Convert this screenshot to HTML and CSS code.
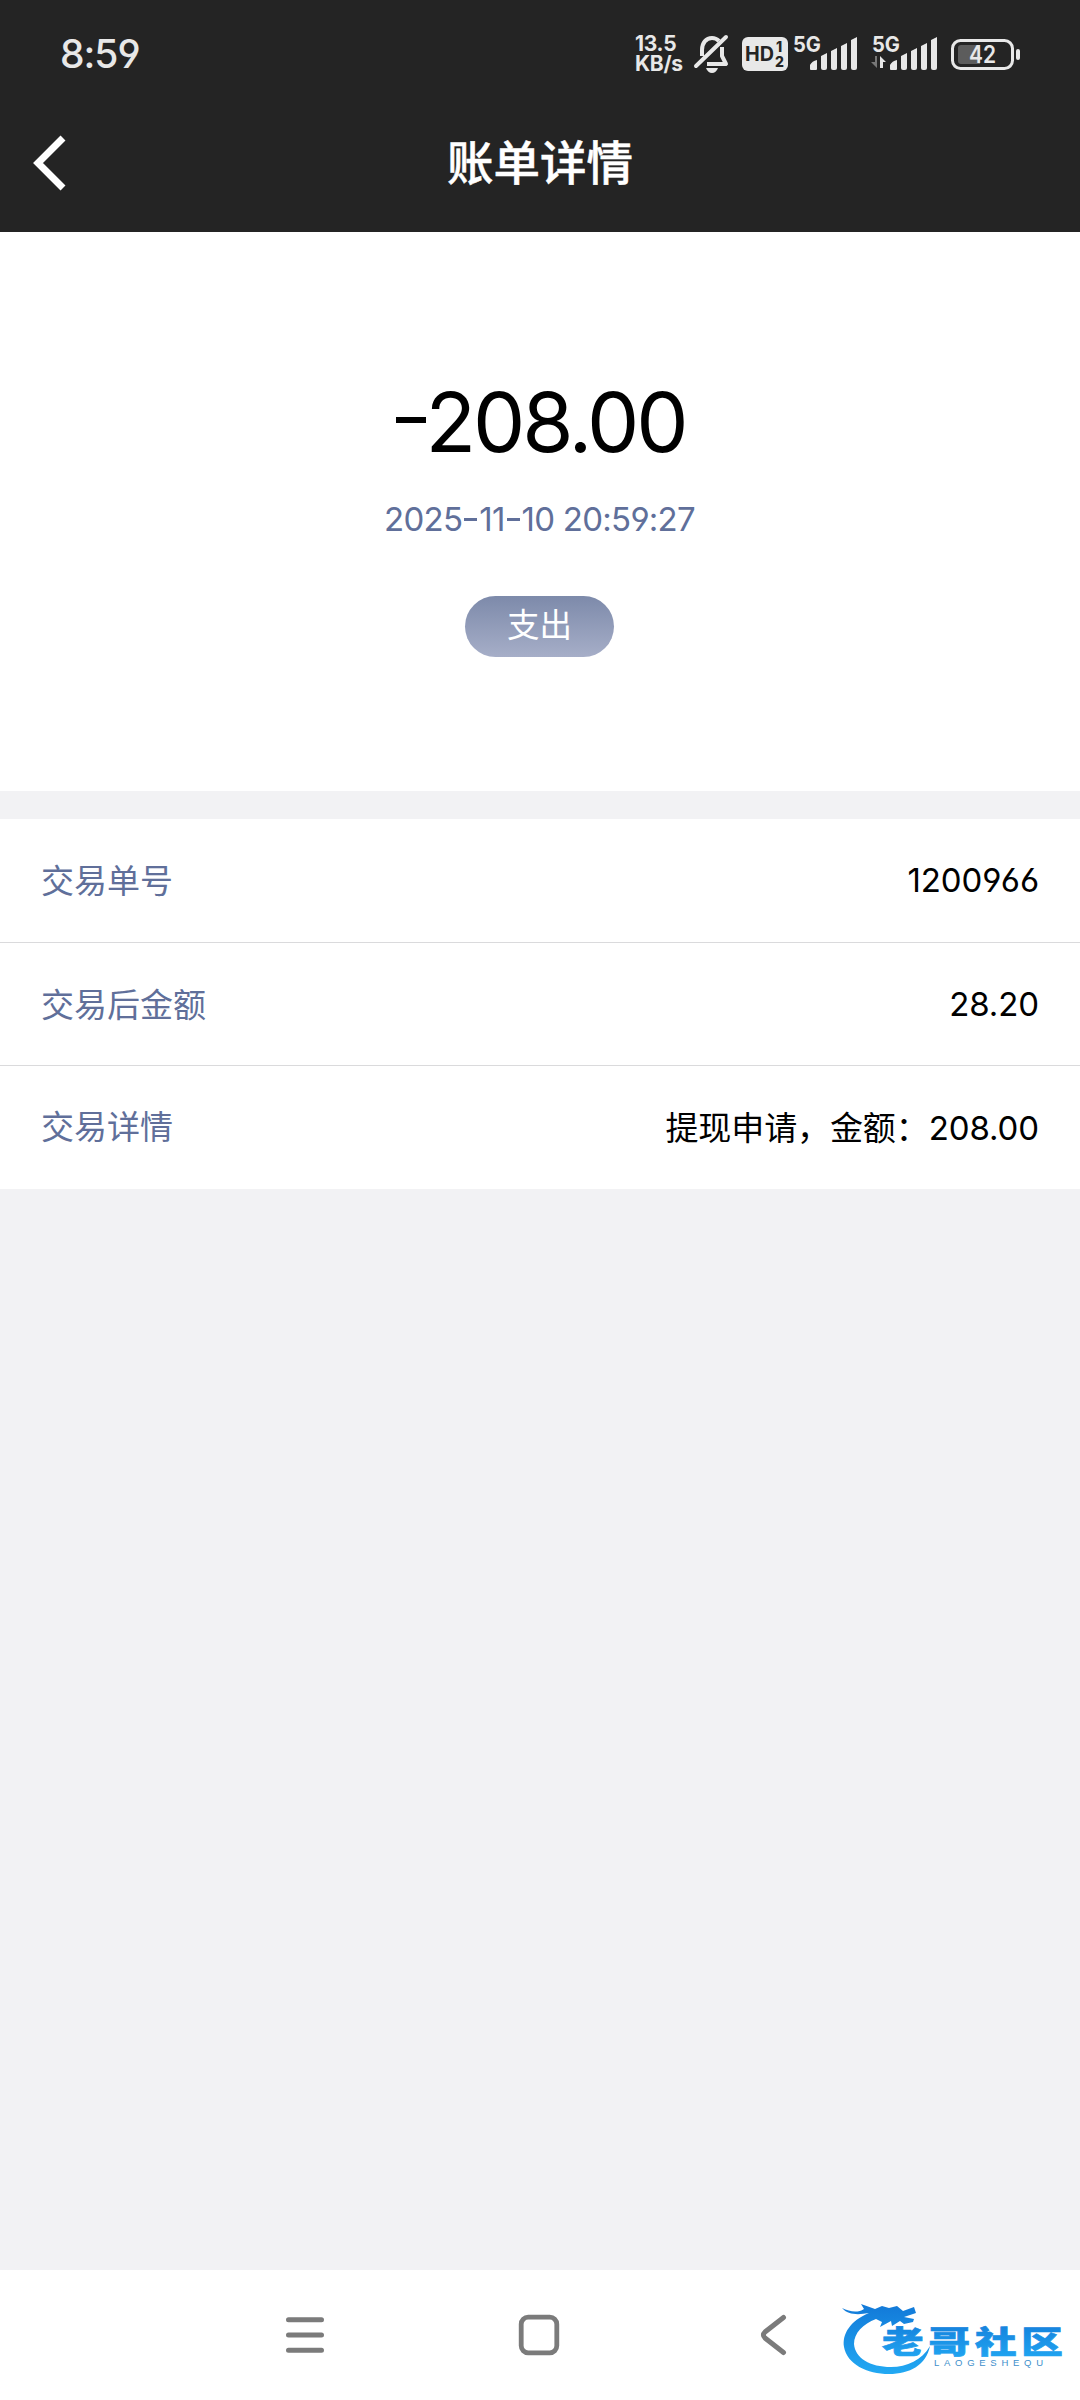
FILE: index.html
```html
<!DOCTYPE html>
<html lang="zh-CN">
<head>
<meta charset="utf-8">
<title>账单详情</title>
<link rel="stylesheet" href="styles.css">
</head>
<body>
<div class="screen">
  <header class="top">
    <div class="status">
      <span class="clock">8:59</span>
      <div class="indicators">
        <div class="speed"><span>13.5</span><span class="unit">KB/s</span></div>
        <svg class="bell" width="36" height="40" viewBox="0 0 36 40" fill="none" stroke="#e8e8e8" stroke-width="4">
          <path d="M8 22V16C8 9 12 4 18 4C21 4 23 5 25 7M28 13V22L32 30H13" stroke-linejoin="round"/>
          <path d="M2 32L32 3" stroke-linecap="round"/>
          <path d="M12 34H24Q22 39 18 39Q14 39 12 34Z" fill="#e8e8e8" stroke="none"/>
        </svg>
        <svg class="hd" width="46" height="34" viewBox="0 0 46 34">
          <rect width="46" height="34" rx="6" fill="#e8e8e8"/>
          <text x="3" y="24" font-size="20" font-weight="700" textLength="29" lengthAdjust="spacingAndGlyphs">HD</text>
          <text x="34" y="15" font-size="14" font-weight="800">1</text>
          <text x="33" y="30" font-size="14" font-weight="800">2</text>
        </svg>
        <svg class="signal" width="66" height="42" viewBox="0 -4 66 42" fill="#e8e8e8">
          <text x="0" y="18" font-size="21.500" font-weight="700" textLength="28" lengthAdjust="spacingAndGlyphs">5G</text>
          <path d="M17 35V31Q19 27 24 26V35Q24 36 23 36H18Q17 36 17 35ZM28 22L34 19V34Q34 36 32 36H30Q28 36 28 34ZM38 17L44 14V34Q44 36 42 36H40Q38 36 38 34ZM48 12L54 9V34Q54 36 52 36H50Q48 36 48 34ZM58 6L64 3V34Q64 36 62 36H60Q58 36 58 34Z"/>
        </svg>
        <svg class="signal-data" width="66" height="42" viewBox="0 -4 66 42" fill="#e8e8e8">
          <text x="0" y="18" font-size="21.500" font-weight="700" textLength="28" lengthAdjust="spacingAndGlyphs">5G</text>
          <path d="M3 22H5V34L-1 28H3Z" fill="#777"/>
          <path d="M8 22L14 28H11V34H8Z"/>
          <path d="M18 35V31Q20 27 25 26V35Q25 36 24 36H19Q18 36 18 35ZM29 22L35 19V34Q35 36 33 36H31Q29 36 29 34ZM39 17L45 14V34Q45 36 43 36H41Q39 36 39 34ZM49 12L55 9V34Q55 36 53 36H51Q49 36 49 34ZM59 6L65 3V34Q65 36 63 36H61Q59 36 59 34Z"/>
        </svg>
        <svg class="battery" width="70" height="32" viewBox="0 0 70 32">
          <rect x="1.500" y="1.500" width="60" height="28" rx="8" fill="none" stroke="#e8e8e8" stroke-width="3"/>
          <path d="M10 6H29V25H10Q7 25 7 22V9Q7 6 10 6Z" fill="#5c5c5c"/>
          <rect x="65" y="10" width="4" height="11" rx="2" fill="#e8e8e8"/>
          <text x="18" y="24" font-size="24" font-weight="600" fill="#e8e8e8" textLength="27" lengthAdjust="spacingAndGlyphs">42</text>
        </svg>
      </div>
    </div>
    <div class="titlebar">
      <svg class="back" width="34" height="56" viewBox="0 0 34 56" fill="none" stroke="#fff" stroke-width="7"><path d="M31 3L6 28L31 53"/></svg>
      <h1>账单详情</h1>
    </div>
  </header>
  <section class="summary">
    <div class="amount"><span class="minus"></span>208.00</div>
    <div class="date">2025<i></i>11<i></i>10 20:59:27</div>
    <div class="tag">支出</div>
  </section>
  <section class="details">
    <div class="row"><span class="label">交易单号</span><span class="value">1200966</span></div>
    <div class="row"><span class="label">交易后金额</span><span class="value">28.20</span></div>
    <div class="row"><span class="label">交易详情</span><span class="value">提现申请，金额：208.00</span></div>
  </section>
  <nav class="navbar">
    <svg width="40" height="40" viewBox="0 0 40 40" fill="none" stroke="#7b7b7b" stroke-width="5" stroke-linecap="round"><path d="M3.500 4.700H36.500M3.500 20H36.500M3.500 35.300H36.500"/></svg>
    <svg width="42" height="42" viewBox="0 0 42 42" fill="none" stroke="#7b7b7b" stroke-width="4.800"><rect x="3.200" y="3.200" width="35.600" height="35.600" rx="7"/></svg>
    <svg width="28" height="42" viewBox="0 0 28 42" fill="none" stroke="#7b7b7b" stroke-width="5" stroke-linecap="round"><path d="M24.500 3.500L6 18Q2.800 21 6 24L24.500 38.500"/></svg>
  </nav>
  <svg class="watermark" width="226" height="80" viewBox="0 0 226 80">
    <defs>
      <linearGradient id="blue" x1="0" y1="0" x2="0" y2="1"><stop offset="0" stop-color="#1279d8"/><stop offset="1" stop-color="#22a9f3"/></linearGradient>
    </defs>
    <path d="M29 15C10 23 2 36 4 49C7 66 27 76 49 76C70 76 86 67 90 48C82 62 67 69 51 69C30 69 15 60 14 46C14 35 23 26 36 21L42 24L40 29L51 23L52 28L60 23L64 26L73 24L74 21L64 19L76 15L74 9L63 13L57 8L49 10L42 8L35 11L21 6L24 11C18 15 10 14 2 10C8 17 18 17 29 15Z" fill="url(#blue)"/>
    <g transform="translate(42 54.500) scale(1.340 1)" font-size="31" font-weight="900" fill="url(#blue)" stroke="url(#blue)" stroke-width="0.700">
      <text x="0" y="0" textLength="135">老哥社区</text>
    </g>
    <text x="94" y="68" font-size="9.500" fill="#3e8fcb" textLength="109" class="latin">LAOGESHEQU</text>
  </svg>
</div>
</body>
</html>
```
FILE: styles.css
```css
* { box-sizing: border-box; }
body { margin: 0; background: #f2f2f4; }
svg { display: block; flex: none; overflow: visible; }
.screen {
  position: relative;
  display: flex;
  flex-direction: column;
  width: 1080px;
  height: 2400px;
  overflow: hidden;
  font-family: Inter, "Noto Sans CJK SC", sans-serif;
  font-feature-settings: "cv03", "cv04";
  color: #000;
}
.top { height: 232px; background: #242424; color: #fff; }
.status {
  display: flex;
  justify-content: space-between;
  align-items: flex-start;
  height: 94px;
  padding: 30px 59px 0 60px;
  color: #e8e8e8;
}
.clock { font-size: 39px; line-height: 48px; font-weight: 500; letter-spacing: -1px; }
.indicators { display: flex; align-items: flex-start; }
.speed { display: flex; flex-direction: column; width: 50px; padding-top: 4px; margin-right: 9px; font-size: 21px; line-height: 20px; font-weight: 700; letter-spacing: -0.3px; }
.bell { margin: 4px 12px 0 0; }
.hd { margin: 7px 5px 0 0; fill: #242424; }
.signal { margin-right: 13px; }
.signal-data { margin-right: 13px; }
.battery { margin-top: 9px; }
.titlebar { display: grid; grid-template-columns: 80px 1fr 80px; align-items: center; height: 138px; }
.back { margin-left: 32px; }
h1 { margin: 0; text-align: center; font-size: 46.500px; line-height: 60px; font-weight: 500; -webkit-text-stroke: 0.500px #fff; }
.summary {
  display: flex;
  flex-direction: column;
  align-items: center;
  height: 559px;
  padding: 138px 1px 0 0;
  background: #fff;
}
.amount { display: flex; align-items: center; height: 104px; font-size: 83px; line-height: 104px; letter-spacing: -3.200px; font-weight: 400; }
.minus { width: 30px; height: 6px; margin: -5px 0 0 2px; background: #000; }
.date { display: flex; align-items: center; margin-top: 23px; font-size: 33px; line-height: 44px; letter-spacing: -0.75px; color: #606f9a; white-space: pre; }
.date i { width: 13px; height: 3px; margin: 0 2px; background: #606f9a; }
.tag {
  width: 149px;
  height: 61px;
  margin-top: 55px;
  border-radius: 31px;
  background: linear-gradient(#7d8aaa, #a6aec8);
  color: #fff;
  font-size: 32.500px;
  line-height: 60px;
  text-align: center;
}
.details { margin-top: 28px; background: #fff; }
.row { display: flex; justify-content: space-between; align-items: center; height: 123px; padding: 0 41px 1px; font-size: 33px; }
.row + .row { border-top: 1px solid #dadadc; }
.row:last-child { height: 124px; padding-bottom: 4px; }
.label { margin-top: -2px; color: #606f9a; }
.value { letter-spacing: -0.1px; }
.navbar {
  display: grid;
  grid-template-columns: repeat(3, 234px);
  justify-content: center;
  justify-items: center;
  align-items: center;
  height: 130px;
  margin-top: auto;
  padding-right: 3px;
  background: #fff;
}
.watermark { position: absolute; left: 840px; top: 2298px; font-family: "Noto Sans CJK SC", sans-serif; }
.latin { font-family: "Liberation Sans", sans-serif; }
```
